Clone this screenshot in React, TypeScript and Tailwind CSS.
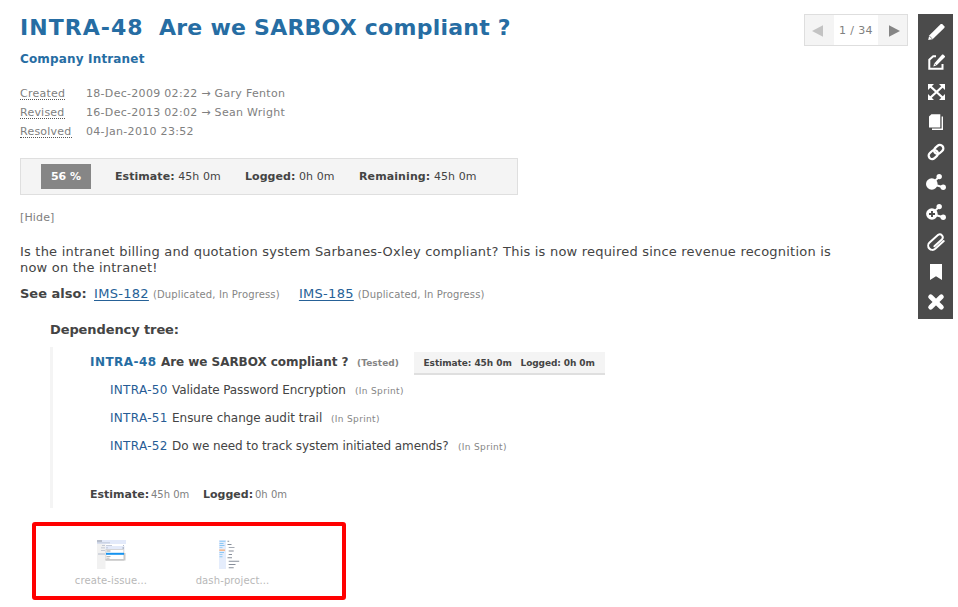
import type { ReactNode } from "react";

const Icon = ({ children }: { children: ReactNode }) => (
  <button className="flex h-[30px] w-[35px] items-center justify-center text-white">
    <svg width="18" height="18" viewBox="0 0 18 18" fill="currentColor" stroke="none" overflow="visible">
      {children}
    </svg>
  </button>
);

const Toolbar = () => (
  <div className="absolute top-[14px] left-[918px] flex h-[305px] w-[35px] flex-col bg-[#4b4b4b] pt-[3px]">
    <Icon>
      <path d="M2.2 12.4 13.8 1.1h1.4l2.3 2.3v1.4L5.6 16.2 1.2 17z" />
      <path d="M2.2 12.8 5.2 15.9" stroke="#4b4b4b" strokeWidth=".7" />
    </Icon>
    <Icon>
      <path d="M9 3.2H6.2L2.3 6.7v9h13.2V11" fill="none" stroke="currentColor" strokeWidth="2" />
      <path d="M7.2 10.6 15.2 1.4h1L18 3.2v.9L9.4 12.6 6.3 13.4z" />
      <path d="M7.2 10.4 9.4 12.6" stroke="#4b4b4b" strokeWidth=".7" />
    </Icon>
    <Icon>
      <path d="M1 1h6L1 7zM12 1h6v6zM1 17v-6l6 6zM18 17v-6l-6 6z" />
      <path d="M3 3l13 12M16 3 3 15" stroke="currentColor" strokeWidth="2.3" />
    </Icon>
    <Icon>
      <path d="M4.4 1.2h8.9v13.4H2V3.6z" />
      <path d="M14.6 3.4H16V17H5v-1.4h9.6z" />
    </Icon>
    <Icon>
      <g fill="none" stroke="currentColor" strokeWidth="2.3">
        <rect x="-5" y="-3.5" width="10" height="7" rx="3.5" transform="translate(11.7 6.4) rotate(-42)" />
        <rect x="-5" y="-3.5" width="10" height="7" rx="3.5" transform="translate(6.3 11.6) rotate(-42)" />
      </g>
    </Icon>
    <Icon>
      <circle cx="4.8" cy="11" r="5.8" />
      <circle cx="12.2" cy="3.6" r="2.7" />
      <circle cx="16.2" cy="14.2" r="2.7" />
      <path d="M4.8 11 12.2 3.6M4.8 11l11.5 3.2" stroke="currentColor" strokeWidth="2" />
    </Icon>
    <Icon>
      <circle cx="4.9" cy="11" r="5.8" />
      <circle cx="12.2" cy="3.6" r="2.7" />
      <circle cx="16.2" cy="14.2" r="2.7" />
      <path d="M4.8 11 12.2 3.6M4.8 11l11.5 3.2" stroke="currentColor" strokeWidth="2" />
      <path d="M5 8v6M2 11h6" stroke="#4b4b4b" strokeWidth="1.9" />
    </Icon>
    <Icon>
      <path
        d="M6 4.2H-5.5A4.2 4.2 0 0 1-5.5-4.2H6a3 3 0 0 1 0 5.9H-4.4"
        transform="translate(9.5 9) rotate(-42)"
        fill="none"
        stroke="currentColor"
        strokeWidth="2"
        strokeLinecap="round"
      />
    </Icon>
    <Icon>
      <path d="M3 1h12v16l-6-3.8L3 17z" />
    </Icon>
    <Icon>
      <path d="M3.6 3.8 14.4 14.2M14.4 3.8 3.6 14.2" stroke="currentColor" strokeWidth="4.8" strokeLinecap="round" />
    </Icon>
  </div>
);

const Pager = () => (
  <div className="absolute top-[14px] left-[804px] flex h-8 w-[104px] border border-[#dedede] bg-[#f4f4f4] text-[11px] text-[#808080]">
    <div className="flex w-[29px] items-center pt-px pl-[7px]">
      <svg width="11" height="12" viewBox="0 0 11 12" fill="#c3c3c3">
        <path d="M0 6 11 .3v11.4z" />
      </svg>
    </div>
    <div className="w-11 bg-white text-center leading-[31px] tracking-[.35px]">1 / 34</div>
    <div className="flex w-[29px] items-center pt-px pl-[11px]">
      <svg width="11" height="12" viewBox="0 0 11 12" fill="#858585">
        <path d="M11 6 0 .3v11.4z" />
      </svg>
    </div>
  </div>
);

const dates = [
  { label: "Created", value: "18-Dec-2009 02:22 → Gary Fenton" },
  { label: "Revised", value: "16-Dec-2013 02:02 → Sean Wright" },
  { label: "Resolved", value: "04-Jan-2010 23:52" },
];

const children = [
  { id: "INTRA-50", title: "Validate Password Encryption", width: "w-[183px] tracking-[-.1px]" },
  { id: "INTRA-51", title: "Ensure change audit trail", width: "w-[159px] tracking-[-.03px]" },
  { id: "INTRA-52", title: "Do we need to track system initiated amends?", width: "w-[286px] tracking-[-.08px]" },
];

const CreateIssueThumb = () => (
  <svg width="29" height="29" viewBox="0 0 29 29">
    <path fill="#f1f1f1" d="M0 4h8.5v25H0z" />
    <path fill="#e3eafa" d="M0 0h29v4H0zM8.5 6h19v3.5h-19z" />
    <path fill="#8b929f" d="M0 .5h5v1H0z" />
    <path fill="#b4bccb" d="M0 2.5h13v.8H0zM5 5h3v.8H5zM9 5h6v.8H9zM4 7.5h4v.8H4zM4 10h4v.8H4zM1 13.5h7v1H1zM9 7.5h2v.8H9zM26 5h1v1h-1zM25.5 7h1.5v2h-1.5z" />
    <path fill="#fff" stroke="#c6c6c6" strokeWidth=".7" d="M8.8 9.5h18v10.8h-18z" />
    <path fill="#1593ef" d="M9 12.8h18v2H9z" />
    <path fill="#a2a2a2" d="M9.5 10.6h4v.8h-4zM9.5 16h4v.8h-4zM9.5 17.7h3v.8h-3z" />
    <path fill="#c9c9c9" d="M8.5 19h20v1.6h-20zM27 13h1.5v7H27z" />
  </svg>
);

const DashProjectThumb = () => (
  <svg width="21" height="29" viewBox="0 0 21 29">
    <path fill="#e5edfc" d="M0 0h7v29H0z" />
    <path fill="#8cc8f4" d="M.5.8h6v1h-6zM.5 3h4v.9h-4zM.5 5h5v.9h-5zM.5 7.2h3v.9h-3zM.5 12h4.5v.9H.5zM.5 14.2h3v.9h-3zM.5 16.3h3v.9h-3z" />
    <path fill="#f6ae78" d="M.3 9.5h5.7v1.3H.3z" />
    <path fill="#878e9a" d="M8.5.8h1.7v1H8.5zM8.5 4h4v1h-4zM9.7 7.2h5.8v.9H9.7zM9.7 10.6h5v.9h-5zM9.7 14h3.3v.9H9.7zM8.5 17.2h4.5v1H8.5zM9.7 20.7h10.5v1H9.7zM9.7 24h6.8v1H9.7zM9.7 27.2h5v1h-5z" />
  </svg>
);

export default function App() {
  return (
    <div className="relative h-[607px] w-[958px] overflow-hidden bg-white pl-5 font-['DejaVu_Sans',Verdana,sans-serif] whitespace-pre text-[#444]">
      <Pager />
      <Toolbar />

      <h1 className="flex pt-[14px] text-[22px] leading-7 font-bold text-[#266da3]">
        <span className="w-[139px] tracking-[1.05px]">INTRA-48</span>
        <span className="tracking-[.24px]">Are we SARBOX compliant ?</span>
      </h1>
      <h2 className="mt-2 text-[12px] leading-[18px] font-bold tracking-[.16px] text-[#266da3]">Company Intranet</h2>

      <div className="mt-[16px] text-[11px] tracking-[.3px] text-[#808080]">
        {dates.map((d) => (
          <div key={d.label} className="flex h-[19px]">
            <div className="w-[66px]">
              <span className="inline-block h-[16px] border-b border-dotted border-[#555] leading-[19px] tracking-[.23px]">{d.label}</span>
            </div>
            <span className="leading-[19px]">{d.value}</span>
          </div>
        ))}
      </div>

      <div className="mt-[17px] flex h-[37px] w-[498px] border border-[#dfdfdf] bg-[#f4f4f4] pt-[5px] pl-5 text-[11px] leading-[25px]">
        <div className="mr-6 h-[25px] w-[50px] bg-[#868686] text-center font-bold text-white">56 %</div>
        <span className="w-[130px] tracking-[.06px]"><b>Estimate:</b> 45h 0m</span>
        <span className="w-[114px] tracking-[.06px]"><b>Logged:</b> 0h 0m</span>
        <span className="tracking-[.1px]"><b>Remaining:</b> 45h 0m</span>
      </div>

      <div className="mt-[14px] text-[11px] leading-[18px] tracking-[.15px] text-[#808080]">[Hide]</div>

      <p className="mt-[17px] text-[13px] leading-4 tracking-[.208px]">
        {"Is the intranet billing and quotation system Sarbanes-Oxley compliant? This is now required since revenue recognition is\nnow on the intranet!"}
      </p>

      <div className="mt-[9px] flex h-[18px] items-baseline text-[13px] leading-[18px]">
        <b className="w-[74px]">See also:</b>
        <a className="text-[#266197] tracking-[.3px] underline underline-offset-2">IMS-182</a>
        <span className="ml-1 w-[146px] text-[10px] tracking-[.14px] text-[#858585]">(Duplicated, In Progress)</span>
        <a className="text-[#266197] tracking-[.3px] underline underline-offset-2">IMS-185</a>
        <span className="ml-1 text-[10px] tracking-[.14px] text-[#858585]">(Duplicated, In Progress)</span>
      </div>

      <h3 className="mt-[18px] ml-[30px] text-[13px] leading-[18px] font-bold tracking-[-.1px]">Dependency tree:</h3>
      <div className="mt-[8px] ml-[30px] h-[161px] border-l-[3px] border-[#f4f4f4] pl-[37px] text-[12px]">
        <div className="flex h-[28px] pt-[5px] font-bold">
          <span className="w-[71px] leading-5 tracking-[.45px] text-[#266da3]">INTRA-48</span>
          <span className="w-[196px] leading-5 tracking-[-.05px]">Are we SARBOX compliant ?</span>
          <span className="w-[57px] text-[9px] leading-[22px] tracking-[.07px] text-[#858585]">(Tested)</span>
          <div className="flex h-[23px] w-[191px] border-b-2 border-[#dfdfdf] bg-[#f4f4f4] pl-[9.5px] text-[9px] leading-[22px]">
            <span className="w-[97px] tracking-[-.06px]">Estimate: 45h 0m</span>
            <span className="tracking-[-.1px]">Logged: 0h 0m</span>
          </div>
        </div>
        <div className="pt-[5px] pl-5">
          {children.map((c) => (
            <div key={c.id} className="flex h-7 leading-5">
              <span className="w-[62px] tracking-[.3px] text-[#265c95]">{c.id}</span>
              <span className={c.width}>{c.title}</span>
              <span className="text-[9px] leading-[22px] tracking-[.33px] text-[#858585]">(In Sprint)</span>
            </div>
          ))}
        </div>
        <div className="mt-[21px] flex items-baseline text-[11px] leading-5">
          <b className="w-[61px]">Estimate:</b>
          <span className="w-[52px] text-[10px] text-[#808080]">45h 0m</span>
          <b className="w-[52px]">Logged:</b>
          <span className="text-[10px] text-[#808080]">0h 0m</span>
        </div>
      </div>

      <div className="mt-[14px] ml-3 flex h-[78px] w-[314px] rounded-[3px] border-4 border-[#ff0000] pt-[14px] pl-[14px] text-[10px] text-[#b8b8b8]">
        <div className="flex w-[122px] flex-col items-center">
          <CreateIssueThumb />
          <span className="leading-[23px] tracking-[.12px]">create-issue...</span>
        </div>
        <div className="flex w-[121px] flex-col items-center">
          <div className="mr-[7px]"><DashProjectThumb /></div>
          <span className="leading-[23px] tracking-[.12px]">dash-project...</span>
        </div>
      </div>
    </div>
  );
}
